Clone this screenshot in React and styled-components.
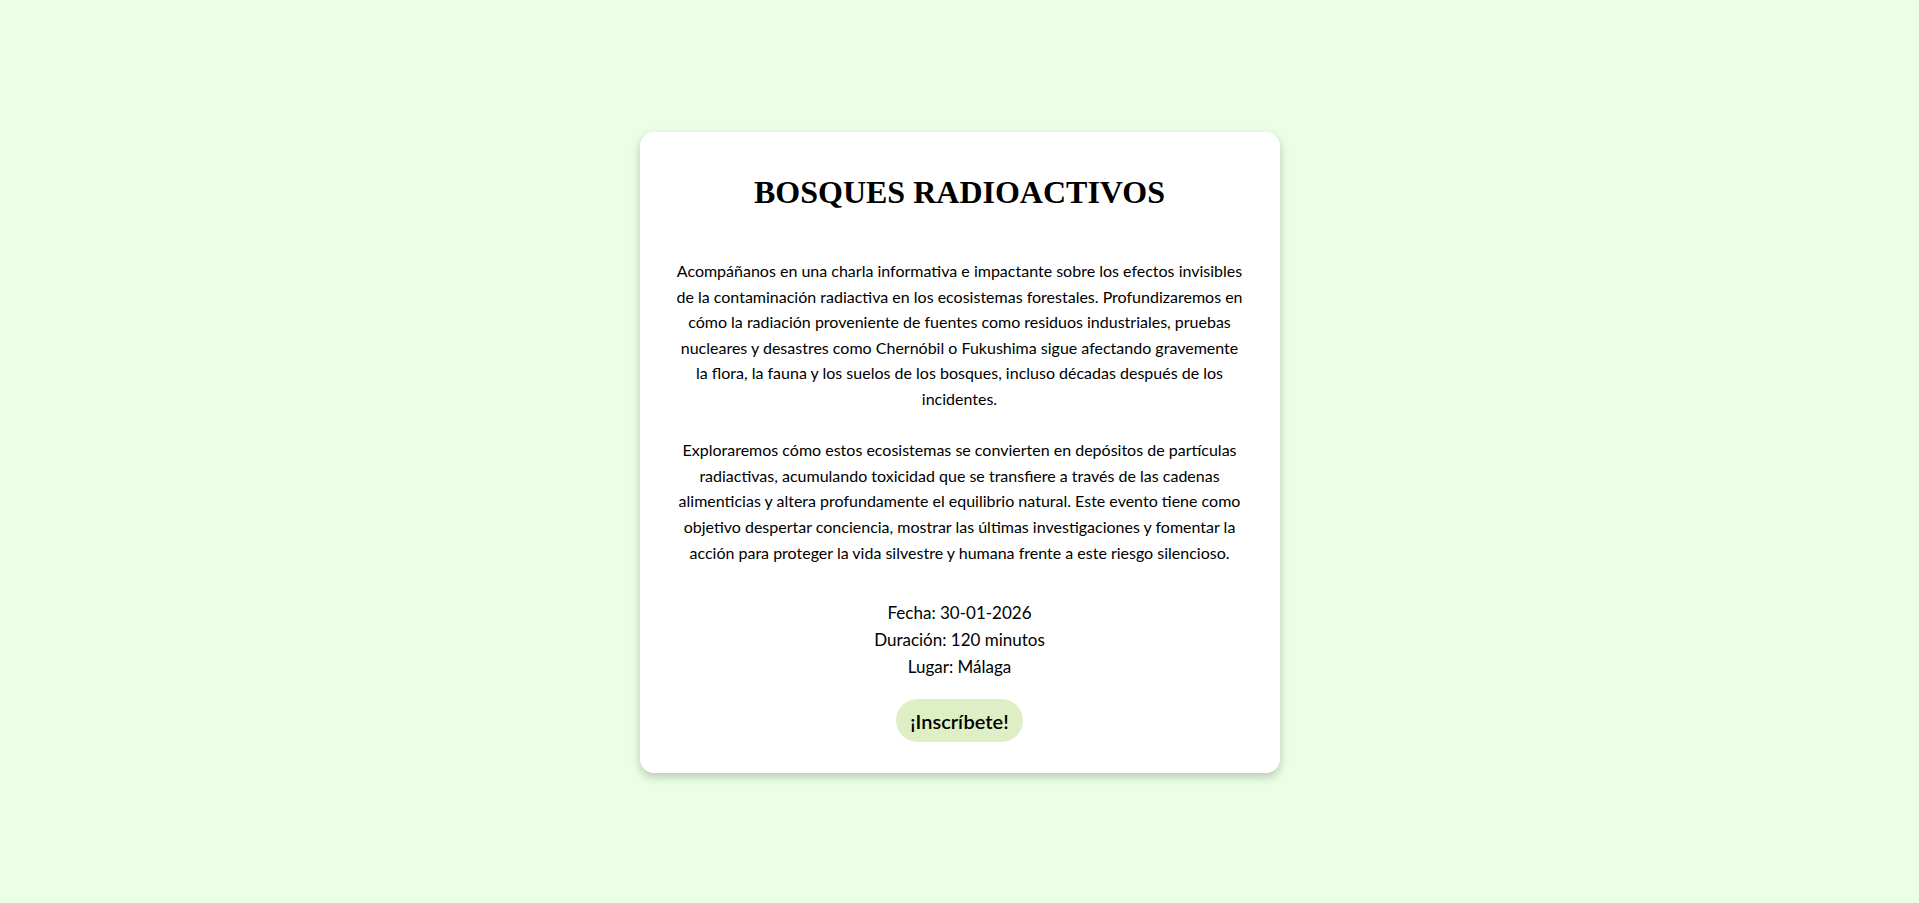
import React from "react";
import styled, { createGlobalStyle } from "styled-components";

const GlobalStyle = createGlobalStyle`
  html, body {
    margin: 0;
    padding: 0;
    background: #eaffe6;
  }
  body {
    font-family: "Lato", "Noto Sans", sans-serif;
  }
`;

const Page = styled.main`
  min-height: 903px;
  display: flex;
  justify-content: center;
  align-items: flex-start;
  padding-top: 132px;
  box-sizing: border-box;
`;

const Card = styled.section`
  width: 640px;
  box-sizing: border-box;
  background: #ffffff;
  border-radius: 14px;
  box-shadow: 0 4px 10px rgba(0, 0, 0, 0.22);
  padding: 28px 35px 31px;
  text-align: center;
  color: #000;
`;

const Title = styled.h1`
  font-family: "Liberation Serif", "Times New Roman", serif;
  font-size: 32px;
  font-weight: 700;
  margin: 14px 0 47px;
`;

const Description = styled.p`
  font-size: 16px;
  line-height: 25.6px;
  margin: 0 0 34px;
`;

const Info = styled.div`
  font-size: 17px;
  line-height: 27px;
  margin-bottom: 19px;
`;

const Button = styled.button`
  font-family: "Lato", "Noto Sans", sans-serif;
  font-size: 20px;
  font-weight: 600;
  color: #000;
  background: #dfefc5;
  border: none;
  border-radius: 22px;
  height: 43px;
  padding: 0 14px;
  cursor: pointer;
`;

export default function App() {
  return (
    <>
      <GlobalStyle />
      <Page>
        <Card>
          <Title>BOSQUES RADIOACTIVOS</Title>
          <Description>
            Acompáñanos en una charla informativa e impactante sobre los efectos
            invisibles de la contaminación radiactiva en los ecosistemas
            forestales. Profundizaremos en cómo la radiación proveniente de
            fuentes como residuos industriales, pruebas nucleares y desastres
            como Chernóbil o Fukushima sigue afectando gravemente la flora, la
            fauna y los suelos de los bosques, incluso décadas después de los
            incidentes.
            <br />
            <br />
            Exploraremos cómo estos ecosistemas se convierten en depósitos de
            partículas radiactivas, acumulando toxicidad que se transfiere a
            través de las cadenas alimenticias y altera profundamente el
            equilibrio natural. Este evento tiene como objetivo despertar
            conciencia, mostrar las últimas investigaciones y fomentar la acción
            para proteger la vida silvestre y humana frente a este riesgo
            silencioso.
          </Description>
          <Info>
            Fecha: 30-01-2026
            <br />
            Duración: 120 minutos
            <br />
            Lugar: Málaga
          </Info>
          <Button>¡Inscríbete!</Button>
        </Card>
      </Page>
    </>
  );
}
